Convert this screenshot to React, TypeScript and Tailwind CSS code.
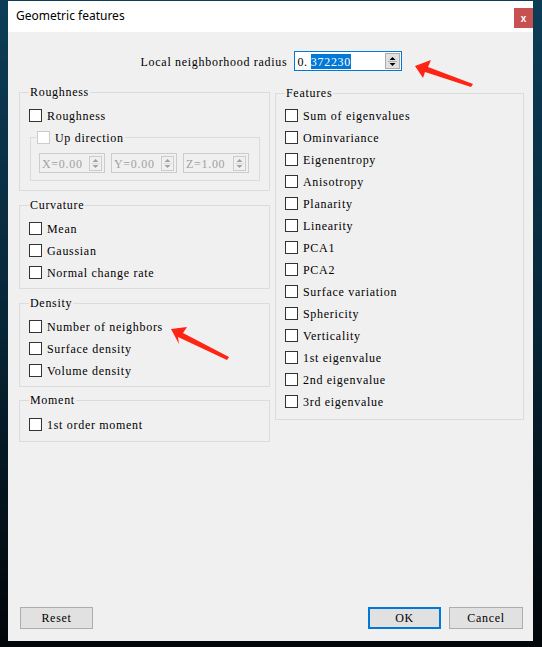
import React from 'react';

const mono = "font-['Liberation_Serif',serif] text-[12px] tracking-[0.7px] leading-[14px]";

const Box = ({ disabled }: { disabled?: boolean }) => (
  <span
    className={
      disabled
        ? 'block w-[13px] h-[13px] shrink-0 border border-[#cccccc] bg-white'
        : 'block w-[13px] h-[13px] shrink-0 border border-[#333333] bg-white'
    }
  />
);

const Check = ({ label }: { label: string }) => (
  <div className="flex items-center h-[13px] gap-[5px]">
    <Box />
    <span className={`${mono} text-black pt-[1px] whitespace-nowrap`}>{label}</span>
  </div>
);

const Group = ({
  title,
  className,
  children,
}: {
  title: string;
  className: string;
  children: React.ReactNode;
}) => (
  <div className={`relative border border-[#dcdcdc] ${className}`}>
    <span className={`absolute -top-[8px] left-[9px] px-[1px] bg-[#f0f0f0] text-black ${mono}`}>{title}</span>
    {children}
  </div>
);

const Arrows = ({ dark }: { dark?: boolean }) => (
  <svg width="9" height="13" viewBox="0 0 9 13">
    <polygon points="1.5,5 7.5,5 4.5,2" fill={dark ? '#000000' : '#a0a0a0'} />
    <line x1="0" y1="6.5" x2="9" y2="6.5" stroke={dark ? '#adadad' : '#dcdcdc'} strokeWidth="1" />
    <polygon points="1.5,8 7.5,8 4.5,11" fill={dark ? '#000000' : '#a0a0a0'} />
  </svg>
);

const Spin = ({ text }: { text: string }) => (
  <div className="flex items-center justify-between w-[66px] h-[20px] border border-[#cccccc] pl-[2px] pr-[2px]">
    <span className={`${mono} text-[#a0a0a0] pt-[1px]`}>{text}</span>
    <div className="flex items-center justify-center w-[13px] h-[15px] border border-[#cccccc]">
      <Arrows />
    </div>
  </div>
);

const features = [
  'Sum of eigenvalues',
  'Ominvariance',
  'Eigenentropy',
  'Anisotropy',
  'Planarity',
  'Linearity',
  'PCA1',
  'PCA2',
  'Surface variation',
  'Sphericity',
  'Verticality',
  '1st eigenvalue',
  '2nd eigenvalue',
  '3rd eigenvalue',
];

export default function App() {
  return (
    <div className="relative w-[542px] h-[647px] overflow-hidden bg-gradient-to-b from-[#0c3d57] via-[#072637] to-[#020609] pt-[1px] pl-[8px]">
      {/* Dialog */}
      <div className="flex flex-col w-[525px] h-[640px] bg-[#f0f0f0]">
        {/* Title bar */}
        <div className="flex items-start justify-between h-[31px] bg-white">
          <span className="mt-[7px] ml-[8px] font-['Noto_Sans',sans-serif] text-[12px] leading-[16px] text-black">
            Geometric features
          </span>
          <div className="mt-[7px] w-[19px] h-[20px] bg-[#c75050] flex items-center justify-center font-['Liberation_Sans',sans-serif] text-white text-[10px] font-bold">
            x
          </div>
        </div>

        <div className="flex flex-col flex-1 pl-[11px] pr-[9px] pb-[12px]">
          {/* Radius row */}
          <div className="flex items-center justify-center gap-[7px] mt-[19px] h-[20px]">
            <span className={`${mono} text-black pt-[1px]`}>Local neighborhood radius</span>
            <div className="flex items-center w-[108px] h-[20px] border border-[#0078d7] bg-white pl-[2px] pr-[1px]">
              <span className={`${mono} text-black pt-[1px]`}>0.</span>
              <span className={`${mono} ml-[3px] bg-[#0078d7] text-white pt-[1px]`}>372230</span>
              <div className="ml-auto flex items-center justify-center w-[15px] h-[16px] border border-[#adadad] bg-[#e1e1e1]">
                <Arrows dark />
              </div>
            </div>
          </div>

          {/* Columns */}
          <div className="flex gap-[5px] mt-[21px]">
            <div className="flex flex-col w-[251px] gap-[14px]">
              <Group title="Roughness" className="pt-[16px] pl-[9px] pr-[9px] pb-[9px]">
                <Check label="Roughness" />
                <div className="relative mt-[15px] ml-[1px] border border-[#dcdcdc] pt-[15px] pl-[8px] pb-[7px] flex gap-[6px]">
                  <div className="absolute -top-[8px] left-[5px] flex items-center gap-[5px] px-[1px] bg-[#f0f0f0]">
                    <Box disabled />
                    <span className={`${mono} text-black pt-[1px]`}>Up direction</span>
                  </div>
                  <Spin text="X=0.00" />
                  <Spin text="Y=0.00" />
                  <Spin text="Z=1.00" />
                </div>
              </Group>

              <Group title="Curvature" className="flex flex-col gap-[9px] pt-[16px] pl-[9px] pb-[9px]">
                <Check label="Mean" />
                <Check label="Gaussian" />
                <Check label="Normal change rate" />
              </Group>

              <Group title="Density" className="flex flex-col gap-[9px] pt-[16px] pl-[9px] pb-[9px]">
                <Check label="Number of neighbors" />
                <Check label="Surface density" />
                <Check label="Volume density" />
              </Group>

              <Group title="Moment" className="flex flex-col pt-[17px] pl-[9px] pb-[10px] -mt-[1px]">
                <Check label="1st order moment" />
              </Group>
            </div>

            <div className="flex flex-col w-[249px] pt-[1px]">
              <Group title="Features" className="flex flex-col gap-[9px] pt-[15px] pl-[9px] pb-[11px]">
                {features.map((f) => (
                  <Check key={f} label={f} />
                ))}
              </Group>
            </div>
          </div>

          {/* Buttons */}
          <div className="flex items-end justify-between mt-auto">
            <button className={`ml-[1px] w-[73px] h-[22px] border border-[#adadad] bg-[#e1e1e1] ${mono} text-black`}>
              Reset
            </button>
            <div className="flex gap-[8px] mr-[1px]">
              <button className={`w-[73px] h-[22px] border-2 border-[#0078d7] bg-[#e1e1e1] ${mono} text-black`}>
                OK
              </button>
              <button className={`w-[74px] h-[22px] border border-[#adadad] bg-[#e1e1e1] ${mono} text-black`}>
                Cancel
              </button>
            </div>
          </div>
        </div>
      </div>

      {/* Annotation arrows */}
      <svg className="absolute inset-0 pointer-events-none" width="542" height="647" viewBox="0 0 542 647">
        <polygon points="415,66 431,60 428,67 473,84 471,87 425,72 423,78" fill="#ff2414" />
        <polygon points="171,329 187,327 183,333 229,357 227,360 178,337 179,344" fill="#ff2414" />
      </svg>
    </div>
  );
}
